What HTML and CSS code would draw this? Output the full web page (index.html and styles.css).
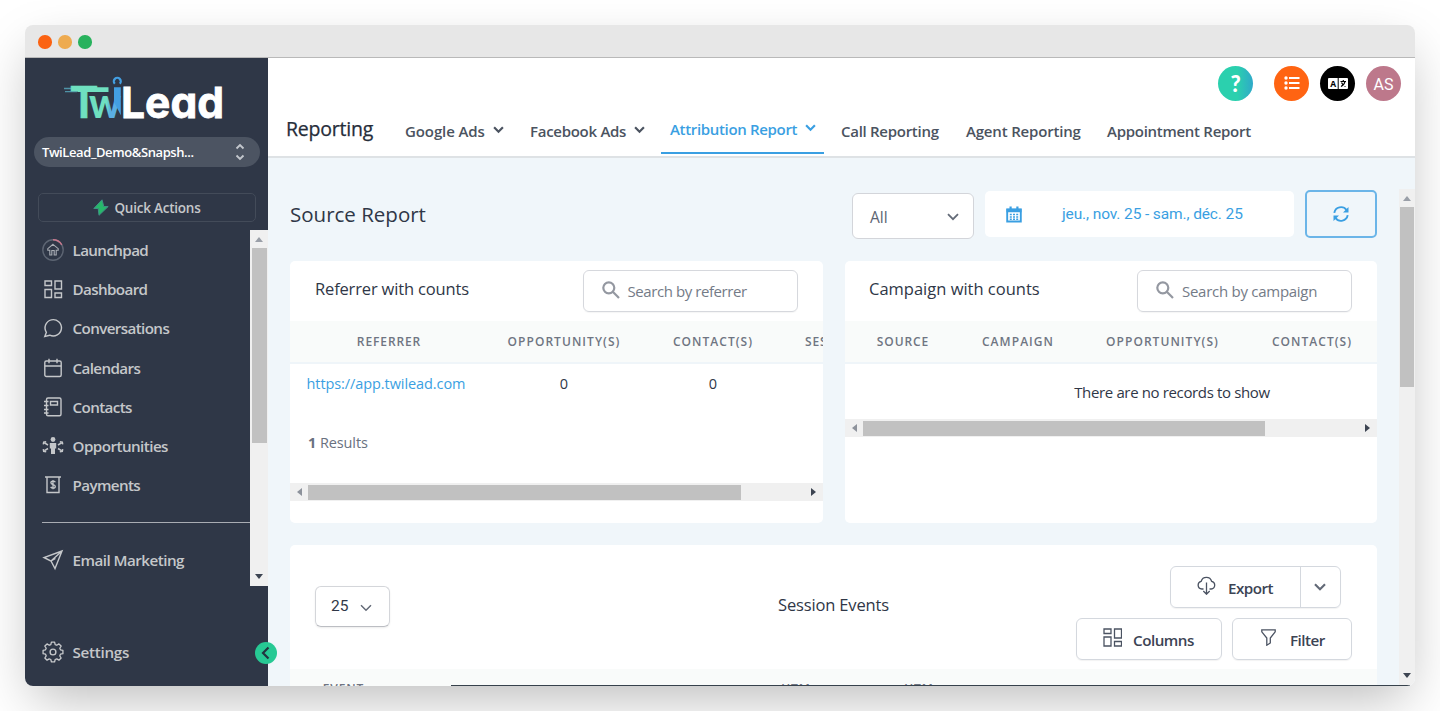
FILE: index.html
```html
<!DOCTYPE html>
<html lang="en">
<head>
<meta charset="utf-8">
<title>TwiLead Reporting</title>
<link rel="stylesheet" href="styles.css">
</head>
<body>
<div class="window">
  <div class="titlebar"><i class="dot red"></i><i class="dot amber"></i><i class="dot green"></i></div>
  <div class="app">
    <aside class="sidebar">
      <svg class="logo" width="164" height="48" viewBox="0 0 164 48">
        <defs><linearGradient id="wg"><stop offset=".55" stop-color="#6fe0c0"/><stop offset=".65" stop-color="#5aaee3"/></linearGradient></defs>
        <path d="M9 13.200h36.500v4.800H15z" fill="#6fe0c0"/>
        <path d="M1 14.500h9M2 17.700h12" stroke="#4f93a8" stroke-width="1.300"/>
        <text x="7.500" y="44" class="lg-t" textLength="27" lengthAdjust="spacingAndGlyphs">T</text>
        <text x="26" y="44" class="lg-w" fill="url(#wg)" textLength="32" lengthAdjust="spacingAndGlyphs">w</text>
        <path d="M51 13.200h6.800v28L51 28z" fill="#439fe2"/>
        <path d="M51.800 9.800a3.500 3.500 0 1 1 5 0" fill="none" stroke="#439fe2" stroke-width="2.200"/>
        <text x="58" y="44" class="lg-l" textLength="103" lengthAdjust="spacingAndGlyphs">Lead</text>
      </svg>
      <div class="account"><span class="account-name">TwiLead_Demo&amp;Snapsh...</span>
        <svg width="10" height="18" viewBox="0 0 10 18"><path d="M1.500 5.500 5 2l3.500 3.500M1.500 12.500 5 16l3.500-3.500" fill="none" stroke="#c3c7cd" stroke-width="1.900"/></svg>
      </div>
      <div class="quick"><svg width="16" height="17" viewBox="0 0 16 17"><path d="M9 .8.800 9.500h4.400L6 16.300l9.200-8.800h-4.400z" fill="#27b86a" stroke="#3f8f84" stroke-width="1"/></svg><span class="quick-text">Quick Actions</span></div>
      <div class="nav-scroll">
        <nav class="nav">
          <a class="item"><svg class="ic" viewBox="0 0 22 22"><circle cx="11" cy="11" r="10.200" stroke="#5d6573"/><path d="M11 .8a10.200 10.200 0 0 1 8.800 5" stroke="#c9788d"/><path d="m11 5.300 5.200 4.400v1.500h-2V16h-2v-4.500H9.800V16h-2v-4.800h-2V9.700z" stroke="#a9adb4" stroke-width="1.100"/></svg><span>Launchpad</span></a>
          <a class="item"><svg class="ic" viewBox="0 0 22 22"><path d="M3 3h6.500v4.500H3zM13 3h6.500v8H13zM3 11.500h6.500v8H3zM13 15h6.500v4.500H13z"/></svg><span>Dashboard</span></a>
          <a class="item"><svg class="ic" viewBox="0 0 22 22"><path d="m2.800 19.500 1.600-4.200a8.200 8.200 0 1 1 3.300 2.900z"/></svg><span>Conversations</span></a>
          <a class="item"><svg class="ic" viewBox="0 0 22 22"><rect x="2.800" y="4" width="16.400" height="15.500" rx="1.500"/><path d="M2.800 9h16.400M7 1.800v4.500M15 1.800v4.500"/></svg><span>Calendars</span></a>
          <a class="item"><svg class="ic" viewBox="0 0 22 22"><rect x="4.500" y="2" width="14.500" height="17.800" rx="1.500"/><path d="M8.500 5.500h7v3.500h-7zM2 5.500h4.500M2 9.500h4.500M2 13.500h4.500M2 17h4.500"/></svg><span>Contacts</span></a>
          <a class="item"><svg class="ic" viewBox="0 0 22 22"><g fill="#c5c7ca" stroke="none"><circle cx="11" cy="4.500" r="2.400"/><path d="M7.800 8h6.400v5.500H13V19H9v-5.500H7.800z"/></g><path d="M6 10 2.500 7.800M1.300 9.300l.4-2.200 2.500-.4M6 13.500l-3.500 2.200M1.300 14.200l.4 2.200 2.500.4M16 10l3.500-2.200M20.700 9.300l-.4-2.200-2.500-.4M16 13.500l3.500 2.200M20.700 14.200l-.4 2.200-2.500.4" stroke-width="1.500"/></svg><span class="t-opp">Opportunities</span></a>
          <a class="item"><svg class="ic" viewBox="0 0 22 22"><path d="M3 3h16M5 3v15.500h12V3"/><path d="M13.300 8.200c-.4-.8-1.200-1-2.200-1-1.200 0-2.200.5-2.200 1.600 0 2.400 4.400 1.300 4.400 3.600 0 1.200-1 1.700-2.200 1.700s-2-.4-2.400-1.200M11 6v9.300" stroke-width="1.300"/></svg><span>Payments</span></a>
          <hr class="rule">
          <a class="item"><svg class="ic" viewBox="0 0 22 22"><path d="M20 2 2 8.500l7 3.500 4 7.500zM9 12 20 2M9 12l4.500-2.500"/></svg><span class="t-mail">Email Marketing</span></a>
        </nav>
        <div class="vbar"><i class="arr up"></i><i class="thumb nav-thumb"></i><i class="arr down"></i></div>
      </div>
      <a class="item settings"><svg class="ic" viewBox="0 0 22 22"><circle cx="11" cy="11" r="2.900"/><path d="M9.300 1.500h3.400l.6 2.600 1.700.7 2.300-1.400 2.300 2.300-1.400 2.300.7 1.700 2.600.6v3.400l-2.600.6-.7 1.700 1.400 2.300-2.300 2.300-2.300-1.400-1.700.7-.6 2.600H9.300l-.6-2.600-1.700-.7-2.300 1.400-2.300-2.300L3.800 16l-.7-1.700-2.600-.6v-3.400l2.600-.6L3.800 8 2.400 5.700l2.300-2.300L7 4.800l1.700-.7z" transform="translate(.6 -.3) scale(.945)" stroke-linejoin="round"/></svg><span>Settings</span></a>
      <span class="collapse"><svg width="22" height="22" viewBox="0 0 22 22"><path d="M13.500 5.500 8 11l5.500 5.500" fill="none" stroke="#22343f" stroke-width="2.200"/></svg></span>
    </aside>
    <section class="content">
      <header class="top">
        <div class="circles">
          <span class="circle help">?</span>
          <span class="circle list"><svg width="16" height="14" viewBox="0 0 16 14"><path d="M5 2h10.500M5 7h10.500M5 12h10.500" stroke="#fff" stroke-width="2.200"/><g fill="#fff"><circle cx="2" cy="2" r="1.700"/><circle cx="2" cy="7" r="1.700"/><circle cx="2" cy="12" r="1.700"/></g></svg></span>
          <span class="circle lang"><svg width="20" height="11" viewBox="0 0 20 11"><rect width="20" height="11" rx="1" fill="#fff"/><path d="M10.200 0v11" stroke="#000"/><text x="2.200" y="8.700" class="lang-a">A</text><path d="M12.500 3.500h5.500M15.300 2v1.500M17 3.500c-.5 2.500-2 4-4 5M13.500 4.500c.8 2 2 3.300 4 4" stroke="#000" stroke-width="1.200" fill="none"/></svg></span>
          <span class="circle user">AS</span>
        </div>
        <div class="tabs">
          <h1 class="tabs-title">Reporting</h1>
          <a class="tab tab-google"><span>Google Ads</span><svg class="chev" viewBox="0 0 10 8"><path d="m1 2 4 4 4-4"/></svg></a>
          <a class="tab tab-fb"><span>Facebook Ads</span><svg class="chev" viewBox="0 0 10 8"><path d="m1 2 4 4 4-4"/></svg></a>
          <a class="tab tab-attr active"><span>Attribution Report</span><svg class="chev" viewBox="0 0 10 8"><path d="m1 2 4 4 4-4"/></svg></a>
          <a class="tab tab-call"><span>Call Reporting</span></a>
          <a class="tab tab-agent"><span>Agent Reporting</span></a>
          <a class="tab tab-appt"><span>Appointment Report</span></a>
        </div>
      </header>
      <div class="body">
        <main class="main">
          <div class="filters">
            <h2 class="page-title">Source Report</h2>
            <div class="select"><span>All</span><svg width="12" height="8" viewBox="0 0 12 8"><path d="m1 1.200 5 5 5-5" fill="none" stroke="#646b78" stroke-width="1.800"/></svg></div>
            <div class="date"><svg width="16" height="17" viewBox="0 0 16 17"><path d="M1.200 3.500h13.600v12H1.200z" fill="none" stroke="#3a9fe2" stroke-width="1.900"/><path d="M.5 2.800h15v3.400H.5zM3.500.5h2.200V4H3.500zM10.300.5h2.200V4h-2.200z" fill="#3a9fe2"/><path d="M3.800 8.500h8.400M3.800 11h8.400M3.800 13.300h8.400" stroke="#3a9fe2" stroke-width="1.600" stroke-dasharray="2 1.200"/></svg><span class="date-text">jeu., nov. 25 - sam., déc. 25</span></div>
            <div class="refresh"><svg width="16" height="16" viewBox="0 0 16 16" fill="none" stroke="#3a9fe2" stroke-width="1.900"><path d="M1.300 6.800A6.800 6.800 0 0 1 13.500 4M14.700 9.200A6.800 6.800 0 0 1 2.500 12"/><path d="M15.500 1v5.500H10zM.5 15V9.500H6z" fill="#3a9fe2" stroke="none"/></svg></div>
          </div>
          <div class="cards">
            <section class="card">
              <div class="card-head"><h3 class="t-ref">Referrer with counts</h3><div class="search"><svg class="mag" viewBox="0 0 18 18"><circle cx="6.800" cy="6.800" r="5.500"/><path d="m10.800 10.800 6.200 6.200"/></svg><span class="t-sref">Search by referrer</span></div></div>
              <div class="row th cols-a"><span>REFERRER</span><span class="h-wide">OPPORTUNITY(S)</span><span class="h-wide">CONTACT(S)</span><span class="h-ses">SESSION(S)</span></div>
              <div class="row td cols-a"><span class="link">https://app.twilead.com</span><span>0</span><span>0</span><span></span></div>
              <p class="results"><b>1</b> <span>Results</span></p>
              <div class="hbar"><i class="arr left"></i><i class="thumb ref-thumb"></i><i class="arr right"></i></div>
            </section>
            <section class="card">
              <div class="card-head"><h3 class="t-camp">Campaign with counts</h3><div class="search"><svg class="mag" viewBox="0 0 18 18"><circle cx="6.800" cy="6.800" r="5.500"/><path d="m10.800 10.800 6.200 6.200"/></svg><span class="t-scamp">Search by campaign</span></div></div>
              <div class="row th cols-b"><span>SOURCE</span><span class="h-wide">CAMPAIGN</span><span class="h-wide">OPPORTUNITY(S)</span><span class="h-wide">CONTACT(S)</span></div>
              <p class="empty">There are no records to show</p>
              <div class="hbar"><i class="arr left"></i><i class="thumb camp-thumb"></i><i class="arr right"></i></div>
            </section>
          </div>
          <section class="card events">
            <div class="events-head">
              <div class="size"><span>25</span><svg width="12" height="8" viewBox="0 0 12 8"><path d="m1 1.200 5 5 5-5" fill="none" stroke="#646b78" stroke-width="1.500"/></svg></div>
              <h3 class="t-events">Session Events</h3>
              <div class="actions">
                <div class="btn-group"><span class="btn-main"><svg width="19" height="19" viewBox="0 0 19 19"><path d="M6.500 13H4.800a3.900 3.900 0 0 1-.6-7.700 5.400 5.400 0 0 1 10.400 0A3.900 3.900 0 0 1 14.200 13h-1.700M9.500 6.500V18M6.300 15l3.200 3.200 3.200-3.200"/></svg><span>Export</span></span><span class="btn-more"><svg width="12" height="8" viewBox="0 0 12 8"><path class="more-chev" d="m1 1.200 5 5 5-5"/></svg></span></div>
                <div class="btn-row">
                  <span class="btn btn-cols"><svg width="19" height="19" viewBox="0 0 19 19"><path d="M1 1h7v4.500H1zM11.500 1h7v9h-7zM1 9h7v9H1zM11.500 13.500h7V18h-7z"/></svg><span>Columns</span></span>
                  <span class="btn btn-filter"><svg width="15" height="17" viewBox="0 0 15 17"><path d="M.8.800h13.400v2L9.300 9v5l-3.500 2.200V9L.8 2.800z"/></svg><span>Filter</span></span>
                </div>
              </div>
            </div>
            <div class="row th cols-c"><span>EVENT</span><span class="h-utm">UTM</span><span>UTM</span></div>
          </section>
        </main>
        <div class="vbar page-bar"><i class="arr up"></i><i class="thumb page-thumb"></i><i class="arr down"></i></div>
      </div>
    </section>
    <i class="edge"></i>
  </div>
</div>
</body>
</html>
```
FILE: styles.css
```css
* { box-sizing: border-box; }
body { margin: 0; height: 711px; overflow: hidden; padding: 25px; background: #fff; font-family: "Open Sans", "Noto Sans", sans-serif; color: #2f3747; }
h1, h2, h3, p { margin: 0; font-weight: 400; }
i { display: block; }
svg { flex: none; display: block; }
span { white-space: nowrap; }

.window { width: 1390px; height: 661px; border-radius: 8px; box-shadow: 0 20px 50px -8px rgba(0,0,0,.27); overflow: hidden; display: flex; flex-direction: column; }
.titlebar { height: 33px; flex: none; background: #e7e7e7; border-bottom: 1px solid #b9b9b9; display: flex; align-items: center; gap: 6.500px; padding: 2px 0 0 13px; }
.dot { width: 13.500px; height: 13.500px; border-radius: 50%; }
.red { background: #fb6313; }
.amber { background: #eeab50; }
.green { background: #28b25d; }
.app { flex: 1; display: flex; position: relative; min-height: 0; }

.sidebar { width: 243px; background: #2f3747; display: flex; flex-direction: column; position: relative; flex: none; }
.logo { margin: 16px 0 0 38px; }
.lg-t { font: 700 43px Lato, sans-serif; fill: #6fe0c0; stroke: #6fe0c0; stroke-width: .6; }
.lg-w { font: 900 42px Lato, sans-serif; }
.lg-l { font: 700 43px Inter, sans-serif; font-feature-settings: "cv11"; fill: #fff; stroke: #fff; stroke-width: .8; }
.account { margin: 15px 0 0 9px; width: 226px; height: 30px; border-radius: 15px; background: #4c5462; display: flex; align-items: center; justify-content: space-between; padding: 0 15px 0 8px; color: #fff; font-size: 13px; font-weight: 600; letter-spacing: -.41px; }
.quick { margin: 26px 0 0 13px; width: 218px; height: 29px; border: 1px solid #434b59; border-radius: 5px; display: flex; align-items: center; justify-content: center; gap: 5px; color: #c5c7ca; font-size: 13.500px; font-weight: 600; letter-spacing: -.23px; }
.nav-scroll { margin-top: 8px; height: 356px; display: flex; }
.nav { flex: 1; padding: .5px 0 0 17px; overflow: hidden; }
.item { display: flex; align-items: center; gap: 8.500px; height: 39.200px; color: #c5c7ca; font-size: 15.200px; font-weight: 600; letter-spacing: -.62px; }
.t-opp { letter-spacing: -.55px; }
.t-mail { letter-spacing: -.52px; }
.ic { width: 22px; height: 22px; fill: none; stroke: #c5c7ca; stroke-width: 1.400; }
.rule { margin: 17px 0 18px; border: 0; height: 1px; background: #a9acb3; }
.settings { margin: 46px 0 0 17px; letter-spacing: -.28px; }
.collapse { position: absolute; left: 230px; top: 584px; width: 22px; height: 22px; border-radius: 50%; background: #27c994; z-index: 2; }

.vbar { width: 18px; background: #f0f0f0; display: flex; flex-direction: column; align-items: center; position: relative; }
.hbar { height: 18px; background: #f0f0f0; display: flex; align-items: center; }
.thumb { background: #c1c1c1; flex: none; }
.arr { width: 0; height: 0; flex: none; border: 4px solid transparent; }
.up { border-bottom: 5px solid #9a9fa8; border-top: 0; margin: 7px 0 6px; }
.down { border-top: 5px solid #3d4552; border-bottom: 0; margin: auto 0 7px; }
.left { border-right: 5px solid #8d929b; border-left: 0; margin: 0 6px 0 7px; }
.right { border-left: 5px solid #3d4552; border-right: 0; margin: 0 7px 0 auto; }
.nav-thumb { width: 15px; height: 195px; }
.page-bar { width: 16px; margin-top: 31px; height: 496px; }
.page-thumb { width: 14px; height: 180px; }

.content { flex: 1; display: flex; flex-direction: column; min-width: 0; }
.top { height: 100px; flex: none; background: #fff; border-bottom: 2px solid #dee2e5; display: flex; flex-direction: column; justify-content: space-between; box-shadow: 0 2px 3px rgba(80,100,120,.07); }
.circles { display: flex; justify-content: flex-end; gap: 11px; padding: 8px 14px 0 0; }
.circle { width: 35px; height: 35px; border-radius: 50%; display: flex; align-items: center; justify-content: center; color: #fff; }
.help { margin-right: 10px; background: linear-gradient(90deg, #2bd0ae 55%, #2fa9c9); font: 900 22px Lato, sans-serif; }
.list { background: #ff6412; padding-bottom: 2px; }
.lang { background: #000; }
.lang-a { font: 700 8.500px "Open Sans", sans-serif; }
.user { background: #bd788b; font: 400 16px Roboto, sans-serif; padding-top: 2px; }
.tabs { display: flex; height: 49px; padding-left: 18px; color: #4b5360; font-size: 15px; font-weight: 600; letter-spacing: -.28px; align-items: flex-start; }
.tabs-title { font-size: 19.500px; font-weight: 500; letter-spacing: -.2px; color: #262d3a; line-height: 26px; margin-top: 9px; width: 119px; -webkit-text-stroke: .25px #262d3a; }
.tab { display: flex; align-items: center; gap: 8px; height: 26px; margin-top: 11px; }
.chev { width: 11px; height: 9px; fill: none; stroke: currentColor; stroke-width: 2; margin-top: -3px; }
.tab-google { width: 125px; letter-spacing: -.1px; }
.tab-fb { width: 131px; }
.active { color: #3a9fe2; border-bottom: 2px solid #3a9fe2; height: 38px; width: 163px; margin: 9px 17px 0 0; padding: 0 9px 11px; letter-spacing: -.33px; }
.tab-call { width: 125px; }
.tab-agent { width: 141px; letter-spacing: -.18px; }

.body { flex: 1; display: flex; background: #f0f6fa; min-height: 0; }
.main { flex: 1; padding: 32px 22px 0; min-width: 0; }
.filters { display: flex; align-items: flex-start; height: 71px; }
.page-title { flex: 1; font-size: 20.500px; line-height: 28px; margin-top: 10px; }
.select { width: 122px; height: 46px; margin: 3px 11px 0 0; border: 1px solid #d3d5da; border-radius: 6px; background: #fff; display: flex; align-items: center; justify-content: space-between; padding: 1px 14px 0 17px; font-size: 15.500px; color: #5c6472; }
.date { width: 309px; height: 46px; margin: 1px 11px 0 0; border-radius: 5px; background: #fff; display: flex; align-items: center; padding-left: 21px; gap: 40px; color: #3a9fe2; font: 400 15.500px Roboto, sans-serif; letter-spacing: -.12px; }
.refresh { width: 72px; height: 48px; border: 2px solid #6bb5e8; border-radius: 5px; display: grid; place-items: center; }
.cards { display: grid; grid-template-columns: 533px 532px; gap: 22px; }
.card { background: #fff; border-radius: 5px; height: 262px; overflow: hidden; }
.card-head { height: 60px; display: flex; justify-content: space-between; padding: 9px 25px 0; }
.card-head h3 { font-size: 16.500px; line-height: 38px; }
.t-ref { letter-spacing: -.16px; }
.t-camp { margin-left: -1px; }
.search { width: 215px; height: 42px; border: 1px solid #d6d8dd; border-radius: 6px; display: flex; align-items: center; gap: 7px; padding: 0 0 0 18px; color: #747b87; font-size: 15px; box-shadow: 0 1px 1px rgba(0,0,0,.04); }
.t-sref { letter-spacing: -.43px; padding-left: .5px; }
.t-scamp { letter-spacing: -.27px; padding-left: 1px; }
.mag { width: 18px; height: 18px; fill: none; stroke: #9498a1; stroke-width: 2.200; margin-top: -2px; }
.row { display: grid; align-items: center; text-align: center; }
.th { height: 43px; background: #f9fbfa; border-bottom: 2px solid #eff5f9; color: #6f7582; font-size: 12px; font-weight: 600; letter-spacing: .9px; }
.h-wide { letter-spacing: 1.050px; }
.td { height: 40px; padding-bottom: 2px; font-size: 14.500px; }
.cols-a { grid-template-columns: 198px 152px 146px 150px; }
.cols-b { grid-template-columns: 116px 114px 175px 124px; }
.cols-c { grid-template-columns: 107px 460px 124px; padding-bottom: 2px; }
.h-utm { padding-left: 338px; }
.h-ses { text-align: left; padding-left: 19px; }
.link { color: #3a9fe2; text-align: left; padding-left: 16.500px; letter-spacing: -.08px; }
.results { font-size: 14.500px; color: #697180; line-height: 20px; letter-spacing: -.1px; margin: 29px 0 30px 18px; }
.ref-thumb { width: 433px; height: 15px; }
.camp-thumb { width: 402px; height: 15px; }
.empty { height: 55px; line-height: 57px; padding-left: 122px; text-align: center; font-size: 15px; letter-spacing: -.36px; }

.events { margin-top: 22px; height: 160px; }
.events-head { height: 124px; display: flex; align-items: flex-start; padding: 21px 25px 0; }
.size { width: 75px; height: 41px; margin-top: 20px; border: 1px solid #d4d6da; border-bottom-color: #bcbec3; border-radius: 6px; display: flex; align-items: center; gap: 12px; padding: 0 0 1px 15px; font: 400 15.500px Roboto, sans-serif; box-shadow: 0 1px 2px rgba(0,0,0,.08); }
.size svg { margin-top: 4px; }
.t-events { font-size: 16.500px; letter-spacing: -.15px; line-height: 24px; margin: 27px auto 0 388px; }
.actions { display: flex; flex-direction: column; gap: 10px; color: #3c4454; font-size: 15.200px; font-weight: 600; letter-spacing: -.5px; }
.actions svg { fill: none; stroke: #4b5362; stroke-width: 1.300; margin-top: -5px; }
.btn-group { align-self: flex-end; margin-right: 11px; width: 171px; height: 42px; border: 1px solid #d4d8de; border-radius: 6px; display: flex; box-shadow: 0 1px 1px rgba(0,0,0,.05); }
.btn-main { width: 130px; border-right: 1px solid #d4d8de; display: flex; align-items: center; gap: 12px; padding: 2px 0 0 26px; }
.btn-more { flex: 1; display: grid; place-items: center; }
.actions .btn-more svg { margin: 0 2px 0 0; }
.more-chev { stroke: #646b78; stroke-width: 2.200; }
.btn-row { display: flex; gap: 10px; }
.btn { height: 42px; border: 1px solid #d4d8de; border-radius: 6px; display: flex; align-items: center; padding-top: 2px; box-shadow: 0 1px 1px rgba(0,0,0,.05); }
.btn-cols { width: 146px; padding-left: 26px; gap: 11px; }
.btn-filter { width: 120px; padding-left: 28px; gap: 14px; }
.edge { position: absolute; left: 426px; right: 5px; bottom: 0; height: 1px; background: #37424c; }
```
